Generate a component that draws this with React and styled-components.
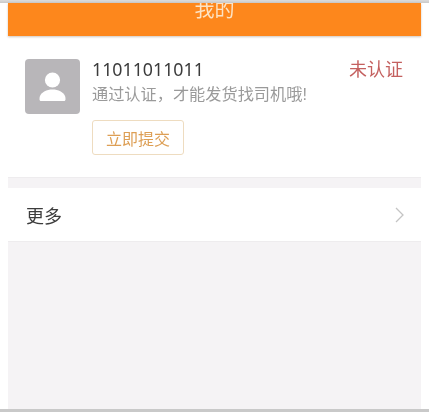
import React from 'react';
import styled, { createGlobalStyle } from 'styled-components';

const GlobalStyle = createGlobalStyle`
html, body {
  margin:0;
  padding:0;
  background:#fff;
}
body {
  font-family:"Liberation Sans","Noto Sans CJK SC",sans-serif;
}
`;

const Page = styled.div`
width:429px;
height:412px;
overflow:hidden;
display:flex;
flex-direction:column;
background:#fff;
filter:blur(0.45px);
`;
const TopEdge = styled.div`
height:3px;
flex:none;
background:linear-gradient(#dcdcdc,#c9c9c9);
`;
const Screen = styled.div`
flex:1;
margin:0 8px;
display:flex;
flex-direction:column;
background:#f5f3f5;
`;
const Header = styled.div`
height:33px;
flex:none;
background:#fd871c;
color:#fde3c4;
font-size:20px;
line-height:14px;
text-align:center;
overflow:hidden;
box-shadow:0 1px 2px rgba(120,90,60,0.35);
position:relative;
`;
const Profile = styled.div`
height:142px;
flex:none;
box-sizing:border-box;
padding:23px 18px 0 17px;
display:flex;
background:#fff;
border-bottom:1px solid #eeecee;
`;
const Avatar = styled.div`
width:55px;
height:55px;
flex:none;
border-radius:4px;
background:#b8b6b9;
display:flex;
align-items:center;
justify-content:center;
`;
const Info = styled.div`
flex:1;
margin-left:12px;
display:flex;
flex-direction:column;
align-items:flex-start;
`;
const Phone = styled.div`
font-family:"Noto Sans","Noto Sans CJK SC",sans-serif;
font-size:17.8px;
line-height:20px;
color:#3c3c3c;
`;
const Hint = styled.div`
font-size:16.2px;
line-height:20px;
margin-top:5px;
color:#9a9a9a;
white-space:nowrap;
`;
const SubmitButton = styled.button`
width:92px;
height:35px;
margin-top:16px;
padding:0;
box-sizing:border-box;
border:1px solid #eedcc0;
border-radius:3px;
background:#fff;
color:#dd9f55;
font-family:inherit;
font-size:16px;
`;
const Status = styled.div`
font-size:18px;
line-height:22px;
color:#c4605f;
white-space:nowrap;
`;
const MoreRow = styled.div`
height:54px;
flex:none;
margin-top:10px;
box-sizing:border-box;
padding:0 17px 0 18px;
display:flex;
align-items:center;
justify-content:space-between;
background:#fff;
border-bottom:1px solid #eeecee;
font-size:18px;
color:#3c3c3c;
`;
const BottomEdge = styled.div`
height:3px;
flex:none;
background:#c9c9c9;
`;

const PersonIcon = () => (
  <svg width="55" height="55" viewBox="0 0 55 55">
    <circle cx="27.5" cy="21" r="7.6" fill="#fff" />
    <path d="M14.5 40.5c0-1 0-2.500.6-3.800 1.700-3.600 6.400-6.200 12.400-6.200s10.700 2.600 12.400 6.200c.6 1.300.6 2.800.6 3.800 0 .8-.6 1.500-1.500 1.500H16c-.9 0-1.500-.7-1.500-1.500z" fill="#fff" />
  </svg>
);

const Chevron = () => (
  <svg width="9" height="16" viewBox="0 0 9 16">
    <path d="M1 1l7 7-7 7" fill="none" stroke="#c4c4c4" strokeWidth="1.300" />
  </svg>
);

const App = () => (
  <Page>
    <GlobalStyle />
    <TopEdge />
    <Screen>
      <Header>我的</Header>
      <Profile>
        <Avatar>
          <PersonIcon />
        </Avatar>
        <Info>
          <Phone>11011011011</Phone>
          <Hint>通过认证，才能发货找司机哦!</Hint>
          <SubmitButton>立即提交</SubmitButton>
        </Info>
        <Status>未认证</Status>
      </Profile>
      <MoreRow>
        <span>更多</span>
        <Chevron />
      </MoreRow>
    </Screen>
    <BottomEdge />
  </Page>
);

export default App;
